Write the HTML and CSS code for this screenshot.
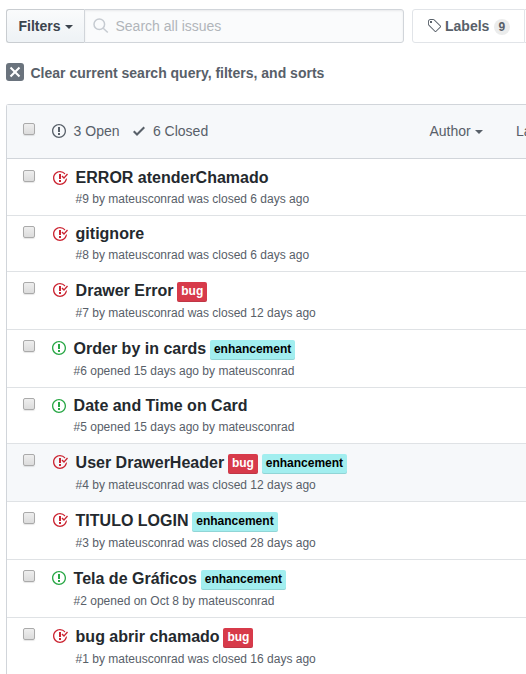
FILE: index.html
```html
<!DOCTYPE html>
<html lang="en">
<head>
<meta charset="utf-8">
<title>Issues</title>
<link rel="stylesheet" href="styles.css">
</head>
<body>
<svg class="defs" width="0" height="0">
  <symbol id="opened" viewBox="0 0 14 16"><path fill-rule="evenodd" d="M7 2.3c3.14 0 5.7 2.56 5.7 5.7s-2.56 5.7-5.7 5.7A5.71 5.71 0 0 1 1.3 8c0-3.14 2.56-5.7 5.7-5.7zM7 1C3.14 1 0 4.14 0 8s3.14 7 7 7 7-3.14 7-7-3.14-7-7-7zm1 3H6v5h2V4zm0 6H6v2h2v-2z"/></symbol>
  <symbol id="closed" viewBox="0 0 16 16"><path fill-rule="evenodd" d="M7 10h2v2H7v-2zm2-6H7v5h2V4zm1.5 1.5l-1 1L12 9l4-4.5-1-1L12 7l-1.5-1.5zM8 13.7A5.71 5.71 0 0 1 2.3 8c0-3.14 2.56-5.7 5.7-5.7 1.83 0 3.45.88 4.5 2.2l.92-.92A6.947 6.947 0 0 0 8 1C4.14 1 1 4.14 1 8s3.14 7 7 7 7-3.14 7-7l-1.52 1.52c-.66 2.41-2.86 4.19-5.48 4.19v-.01z"/></symbol>
</svg>

<div class="toolbar">
  <div class="search">
    <button class="filters">Filters<span class="caret"></span></button>
    <div class="field">
      <svg class="glass" width="16" height="16" viewBox="0 0 16 16"><circle cx="6.3" cy="6.3" r="5.3"/><path d="M10.2 10.2l4.6 4.3"/></svg>
      <span>Search all issues</span>
    </div>
  </div>
  <div class="subnav">
    <a class="labels"><svg width="14" height="16" viewBox="0 0 14 16"><path fill-rule="evenodd" d="M7.73 1.73C7.26 1.26 6.62 1 5.96 1H3.5C2.13 1 1 2.13 1 3.5v2.47c0 .66.27 1.3.73 1.77l6.06 6.06c.39.39 1.02.39 1.41 0l4.59-4.59a.996.996 0 0 0 0-1.41L7.73 1.73zM2.38 7.09c-.31-.3-.47-.7-.47-1.13V3.5c0-.88.72-1.59 1.59-1.59h2.47c.42 0 .83.16 1.13.47l6.14 6.13-4.73 4.73-6.13-6.15zM3.01 3h2v2H3V3h.01z"/></svg><span>Labels</span><span class="counter">9</span></a>
    <a class="next"></a>
  </div>
</div>

<div class="clear">
  <span class="clear-icon"><svg width="12" height="16" viewBox="0 0 12 16"><path d="M7.48 8l3.75 3.75-1.48 1.48L6 9.48l-3.75 3.75-1.48-1.48L4.52 8 .77 4.25l1.48-1.48L6 6.52l3.75-3.75 1.48 1.48L7.48 8z"/></svg></span>
  <span class="clear-text">Clear current search query, filters, and sorts</span>
</div>

<div class="box">
  <div class="head">
    <span class="check"></span>
    <svg class="icon" width="14" height="16"><use href="#opened"/></svg>
    <span class="open-count">3 Open</span>
    <svg class="tick" width="12" height="16" viewBox="0 0 12 16"><path d="M12 5l-8 8-4-4 1.5-1.5L4 10l6.5-6.5L12 5z"/></svg>
    <span>6 Closed</span>
    <div class="menus"><span class="author">Author<span class="caret"></span></span><span class="menu-labels">Labels</span></div>
  </div>
  <ul class="issues">
    <li class="row"><span class="check"></span><svg class="icon red" width="16" height="16"><use href="#closed"/></svg><div class="text"><div class="title">ERROR atenderChamado</div><div class="meta">#9 by mateusconrad was closed 6 days ago</div></div></li>
    <li class="row"><span class="check"></span><svg class="icon red" width="16" height="16"><use href="#closed"/></svg><div class="text"><div class="title">gitignore</div><div class="meta">#8 by mateusconrad was closed 6 days ago</div></div></li>
    <li class="row tagged"><span class="check"></span><svg class="icon red" width="16" height="16"><use href="#closed"/></svg><div class="text"><div class="title">Drawer Error<span class="label bug">bug</span></div><div class="meta">#7 by mateusconrad was closed 12 days ago</div></div></li>
    <li class="row tagged"><span class="check"></span><svg class="icon green" width="14" height="16"><use href="#opened"/></svg><div class="text"><div class="title">Order by in cards<span class="label enh">enhancement</span></div><div class="meta">#6 opened 15 days ago by mateusconrad</div></div></li>
    <li class="row"><span class="check"></span><svg class="icon green" width="14" height="16"><use href="#opened"/></svg><div class="text"><div class="title">Date and Time on Card</div><div class="meta">#5 opened 15 days ago by mateusconrad</div></div></li>
    <li class="row tagged hover"><span class="check"></span><svg class="icon red" width="16" height="16"><use href="#closed"/></svg><div class="text"><div class="title">User DrawerHeader<span class="label bug">bug</span><span class="label enh">enhancement</span></div><div class="meta">#4 by mateusconrad was closed 12 days ago</div></div></li>
    <li class="row tagged"><span class="check"></span><svg class="icon red" width="16" height="16"><use href="#closed"/></svg><div class="text"><div class="title">TITULO LOGIN<span class="label enh">enhancement</span></div><div class="meta">#3 by mateusconrad was closed 28 days ago</div></div></li>
    <li class="row tagged"><span class="check"></span><svg class="icon green" width="14" height="16"><use href="#opened"/></svg><div class="text"><div class="title">Tela de Gráficos<span class="label enh">enhancement</span></div><div class="meta">#2 opened on Oct 8 by mateusconrad</div></div></li>
    <li class="row tagged"><span class="check"></span><svg class="icon red" width="16" height="16"><use href="#closed"/></svg><div class="text"><div class="title">bug abrir chamado<span class="label bug">bug</span></div><div class="meta">#1 by mateusconrad was closed 16 days ago</div></div></li>
  </ul>
</div>
</body>
</html>
```
FILE: styles.css
```css
* { box-sizing: border-box; }
html, body { height: 100%; }
body {
  margin: 0;
  padding: 9px 0 0 6px;
  overflow: hidden;
  background: #fff;
  color: #586069;
  font: 14px/20px "Liberation Sans", Arial, sans-serif;
  white-space: nowrap;
}
svg { display: block; flex: none; fill: currentColor; }
.defs { position: absolute; }

.toolbar { display: flex; gap: 8px; height: 34px; }
.search { display: flex; width: 398px; flex: none; }
.filters {
  width: 78px;
  padding: 0 0 0 11.5px;
  border: 1px solid #c9cdd1;
  border-right: 0;
  border-radius: 3px 0 0 3px;
  background: linear-gradient(#fafbfc, #eff3f6 90%);
  color: #3c444d;
  font: bold 14px/20px "Liberation Sans", Arial, sans-serif;
  text-align: left;
}
.caret {
  display: inline-block;
  margin-left: 4px;
  vertical-align: middle;
  border: 4px solid transparent;
  border-top-color: currentColor;
  border-bottom: 0;
}
.field {
  display: flex;
  align-items: center;
  flex: 1;
  gap: 6.5px;
  padding-left: 8px;
  border: 1px solid #d1d5da;
  border-radius: 0 3px 3px 0;
  background: #fafbfc;
  box-shadow: inset 0 1px 2px rgba(27, 31, 35, .075);
  color: #b1b5ba;
}
.glass { fill: none; stroke: #c6cbd1; stroke-width: 1.5; }
.subnav { display: flex; flex: 1; }
.labels {
  display: flex;
  flex: none;
  align-items: center;
  width: 113px;
  height: 34px;
  padding-left: 14px;
  border: 1px solid #e1e4e8;
  border-radius: 3px 0 0 3px;
  font-weight: bold;
}
.next { flex: 1; border: solid #e1e4e8; border-width: 1px 0; }
.labels svg { margin-right: 4px; }
.counter {
  width: 16px;
  height: 16px;
  margin: 2px 0 0 4.5px;
  border-radius: 8px;
  background: #ebecec;
  font-size: 12px;
  line-height: 16px;
  text-align: center;
}

.clear { display: flex; align-items: center; gap: 6.5px; height: 18px; margin-top: 20px; font-weight: bold; }
.clear-text { padding-top: 2px; }
.clear-icon {
  display: flex;
  align-items: center;
  justify-content: center;
  width: 18px;
  height: 18px;
  border-radius: 3px;
  background: #6a737d;
  color: #fff;
}

.box { margin-top: 23px; border: 1px solid #d1d5da; border-width: 1px 0 0 1px; border-radius: 3px 0 0 0; }
.head { display: flex; align-items: center; height: 54px; padding: 0 0 2px 16px; border-bottom: 1px solid #d1d5da; background: #f6f8fa; }
.check {
  flex: none;
  width: 12px;
  height: 12px;
  margin-right: 16.6px;
  border: 1px solid #aaa;
  border-radius: 2px;
  background: linear-gradient(#eee, #dcdcdc);
  box-shadow: 0 1px 1px rgba(0, 0, 0, .1);
}
.head .check { margin-bottom: 4px; }
.icon { margin-right: 8px; }
.open-count { margin-right: 13.4px; }
.tick { margin-right: 8px; }
.menus { display: flex; flex: 1; justify-content: flex-start; min-width: 0; margin-left: 221.2px; }
.author { margin-right: 33.4px; }
.menu-labels { flex: 1; min-width: 0; overflow: hidden; }

.issues { margin: 0; padding: 0; list-style: none; }
.row { display: flex; align-items: flex-start; height: 56px; padding: 10px 0 0 16px; border-top: 1px solid #dfe2e5; }
.row:first-child { padding-top: 11px; border-top: 0; }
.tagged { height: 58px; }
.hover { background: #f6f8fa; }
.red { color: #cb2431; }
.green { color: #28a745; }
.text { margin-top: -4px; }
.title { display: flex; height: 24px; color: #24292e; font-size: 16px; font-weight: bold; line-height: 23px; }
.tagged .title { height: 26px; line-height: 25px; }
.meta { font-size: 12px; line-height: 18px; }
.label {
  height: 20px;
  margin: 4px 0 0 3.8px;
  padding: 0 4px;
  border-radius: 2px;
  box-shadow: inset 0 -1px 0 rgba(27, 31, 35, .12);
  font-size: 12px;
  line-height: 18px;
}
.bug { background: #d73a4a; color: #fff; }
.enh { background: #a2eeef; color: #000; }
```
